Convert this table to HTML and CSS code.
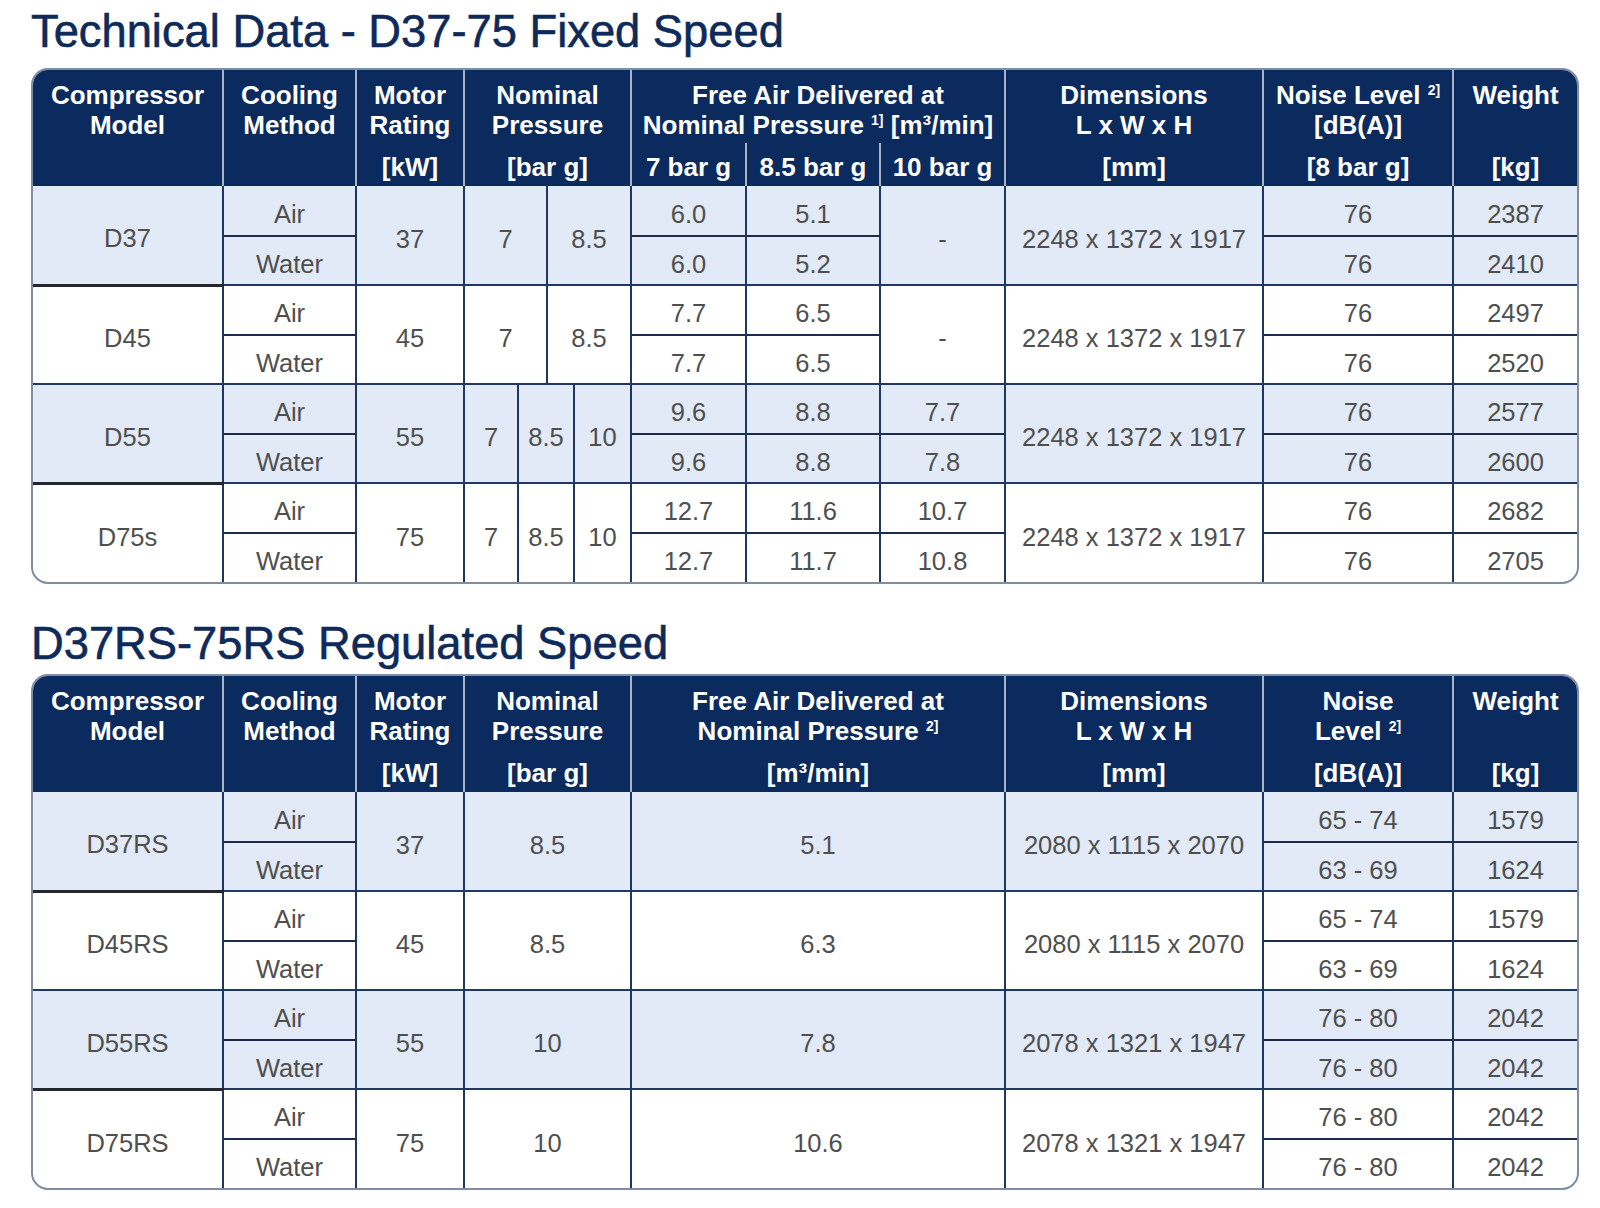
FILE: index.html
```html
<!DOCTYPE html>
<html lang="en">
<head>
<meta charset="utf-8">
<title>Technical Data - D37-75</title>
<link rel="stylesheet" href="styles.css">
</head>
<body>
<div class="page">
  <h1 class="title">Technical Data - D37-75 Fixed Speed</h1>
  <div class="tbl-wrap">
    <table class="spec">
      <colgroup>
        <col class="w-model"><col class="w-cool"><col class="w-motor">
        <col class="w-np1"><col class="w-np2"><col class="w-np3"><col class="w-np4">
        <col class="w-f1"><col class="w-f2"><col class="w-f3">
        <col class="w-dim"><col class="w-noise"><col class="w-weight">
      </colgroup>
      <thead>
        <tr class="ha">
          <th>Compressor<br>Model</th>
          <th>Cooling<br>Method</th>
          <th>Motor<br>Rating</th>
          <th colspan="4">Nominal<br>Pressure</th>
          <th colspan="3">Free Air Delivered at<br>Nominal Pressure <sup>1]</sup> [m³/min]</th>
          <th>Dimensions<br>L x W x H</th>
          <th>Noise Level <sup>2]</sup><br>[dB(A)]</th>
          <th class="last">Weight</th>
        </tr>
        <tr class="hb">
          <th></th>
          <th></th>
          <th>[kW]</th>
          <th colspan="4">[bar g]</th>
          <th>7 bar g</th>
          <th>8.5 bar g</th>
          <th>10 bar g</th>
          <th>[mm]</th>
          <th>[8 bar g]</th>
          <th class="last">[kg]</th>
        </tr>
      </thead>
      <tbody>
        <tr class="g tint first">
          <td rowspan="2" class="model">D37</td><td>Air</td><td rowspan="2">37</td>
          <td colspan="2" rowspan="2">7</td><td colspan="2" rowspan="2">8.5</td>
          <td>6.0</td><td>5.1</td><td rowspan="2">-</td>
          <td rowspan="2">2248 x 1372 x 1917</td><td>76</td><td class="last">2387</td>
        </tr>
        <tr class="s tint">
          <td>Water</td><td>6.0</td><td>5.2</td><td>76</td><td class="last">2410</td>
        </tr>
        <tr class="g">
          <td rowspan="2" class="model dark">D45</td><td>Air</td><td rowspan="2">45</td>
          <td colspan="2" rowspan="2">7</td><td colspan="2" rowspan="2">8.5</td>
          <td>7.7</td><td>6.5</td><td rowspan="2">-</td>
          <td rowspan="2">2248 x 1372 x 1917</td><td>76</td><td class="last">2497</td>
        </tr>
        <tr class="s">
          <td>Water</td><td>7.7</td><td>6.5</td><td>76</td><td class="last">2520</td>
        </tr>
        <tr class="g tint">
          <td rowspan="2" class="model">D55</td><td>Air</td><td rowspan="2">55</td>
          <td rowspan="2">7</td><td colspan="2" rowspan="2">8.5</td><td rowspan="2">10</td>
          <td>9.6</td><td>8.8</td><td>7.7</td>
          <td rowspan="2">2248 x 1372 x 1917</td><td>76</td><td class="last">2577</td>
        </tr>
        <tr class="s tint">
          <td>Water</td><td>9.6</td><td>8.8</td><td>7.8</td><td>76</td><td class="last">2600</td>
        </tr>
        <tr class="g">
          <td rowspan="2" class="model dark">D75s</td><td>Air</td><td rowspan="2">75</td>
          <td rowspan="2">7</td><td colspan="2" rowspan="2">8.5</td><td rowspan="2">10</td>
          <td>12.7</td><td>11.6</td><td>10.7</td>
          <td rowspan="2">2248 x 1372 x 1917</td><td>76</td><td class="last">2682</td>
        </tr>
        <tr class="s">
          <td>Water</td><td>12.7</td><td>11.7</td><td>10.8</td><td>76</td><td class="last">2705</td>
        </tr>
      </tbody>
    </table>
  </div>

  <h1 class="title title-2">D37RS-75RS Regulated Speed</h1>
  <div class="tbl-wrap tbl-wrap-2">
    <table class="spec">
      <colgroup>
        <col class="w-model"><col class="w-cool"><col class="w-motor">
        <col class="w-np"><col class="w-fad">
        <col class="w-dim"><col class="w-noise"><col class="w-weight">
      </colgroup>
      <thead>
        <tr class="ha">
          <th>Compressor<br>Model</th>
          <th>Cooling<br>Method</th>
          <th>Motor<br>Rating</th>
          <th>Nominal<br>Pressure</th>
          <th>Free Air Delivered at<br>Nominal Pressure <sup>2]</sup></th>
          <th>Dimensions<br>L x W x H</th>
          <th>Noise<br>Level <sup>2]</sup></th>
          <th class="last">Weight</th>
        </tr>
        <tr class="hb">
          <th></th>
          <th></th>
          <th>[kW]</th>
          <th>[bar g]</th>
          <th>[m³/min]</th>
          <th>[mm]</th>
          <th>[dB(A)]</th>
          <th class="last">[kg]</th>
        </tr>
      </thead>
      <tbody>
        <tr class="g tint first">
          <td rowspan="2" class="model">D37RS</td><td>Air</td><td rowspan="2">37</td>
          <td rowspan="2">8.5</td><td rowspan="2">5.1</td>
          <td rowspan="2">2080 x 1115 x 2070</td><td>65 - 74</td><td class="last">1579</td>
        </tr>
        <tr class="s tint">
          <td>Water</td><td>63 - 69</td><td class="last">1624</td>
        </tr>
        <tr class="g">
          <td rowspan="2" class="model dark">D45RS</td><td>Air</td><td rowspan="2">45</td>
          <td rowspan="2">8.5</td><td rowspan="2">6.3</td>
          <td rowspan="2">2080 x 1115 x 2070</td><td>65 - 74</td><td class="last">1579</td>
        </tr>
        <tr class="s">
          <td>Water</td><td>63 - 69</td><td class="last">1624</td>
        </tr>
        <tr class="g tint">
          <td rowspan="2" class="model">D55RS</td><td>Air</td><td rowspan="2">55</td>
          <td rowspan="2">10</td><td rowspan="2">7.8</td>
          <td rowspan="2">2078 x 1321 x 1947</td><td>76 - 80</td><td class="last">2042</td>
        </tr>
        <tr class="s tint">
          <td>Water</td><td>76 - 80</td><td class="last">2042</td>
        </tr>
        <tr class="g">
          <td rowspan="2" class="model dark">D75RS</td><td>Air</td><td rowspan="2">75</td>
          <td rowspan="2">10</td><td rowspan="2">10.6</td>
          <td rowspan="2">2078 x 1321 x 1947</td><td>76 - 80</td><td class="last">2042</td>
        </tr>
        <tr class="s">
          <td>Water</td><td>76 - 80</td><td class="last">2042</td>
        </tr>
      </tbody>
    </table>
  </div>
</div>
</body>
</html>
```

FILE: styles.css
```css
html, body {
  margin: 0;
  padding: 0;
  background: #ffffff;
}

body {
  font-family: "Liberation Sans", Arial, Helvetica, sans-serif;
}

.page {
  width: 1548px;
  padding: 6px 0 0 31px;
}

.title {
  margin: 0;
  font-size: 45.3px;
  line-height: 52px;
  font-weight: 400;
  color: #0e2a5a;
  -webkit-text-stroke: 0.6px #0e2a5a;
}

.title-2 {
  margin-top: 34px;
}

.tbl-wrap {
  margin-top: 10px;
  border: 2px solid #7f8ca2;
  border-radius: 17px;
  overflow: hidden;
  background: #ffffff;
}

.tbl-wrap-2 {
  margin-top: 4px;
}

.spec {
  width: 1544px;
  border-collapse: collapse;
  table-layout: fixed;
}

.w-model { width: 190px; }
.w-cool { width: 133px; }
.w-motor { width: 108px; }
.w-np1 { width: 54px; }
.w-np2 { width: 29px; }
.w-np3 { width: 27px; }
.w-np4 { width: 57px; }
.w-np { width: 167px; }
.w-f1 { width: 115px; }
.w-f2 { width: 134px; }
.w-f3 { width: 125px; }
.w-fad { width: 374px; }
.w-dim { width: 258px; }
.w-noise { width: 190px; }
.w-weight { width: 124px; }

.spec th {
  background: #0b2a5d;
  color: #ffffff;
  font-weight: 700;
  font-size: 26px;
  line-height: 30px;
  padding: 0;
  border: 0;
  border-right: 2px solid #a9b3c5;
  text-align: center;
  white-space: nowrap;
}

.spec th sup {
  font-size: 14px;
  line-height: 0;
  vertical-align: 9px;
}

.spec tr.ha {
  height: 73px;
}

.spec tr.ha th {
  vertical-align: top;
  padding-top: 10px;
}

.spec tr.hb {
  height: 43px;
}

.spec tr.hb th {
  vertical-align: middle;
  padding-top: 5px;
}

.spec th.last,
.spec td.last {
  border-right: 0;
}

.spec td {
  font-size: 25.5px;
  color: #4f4f4f;
  text-align: center;
  vertical-align: middle;
  padding: 8px 0 0;
  border: 0;
  border-right: 2px solid #1e3662;
  white-space: nowrap;
}

.spec tbody tr {
  height: 49.5px;
}

.spec tr.tint td {
  background: #e1eaf6;
}

.spec tr.g td {
  border-top: 2px solid #1f3864;
}

.spec tr.g td.dark {
  border-top: 3px solid #23272f;
}

.spec tr.first td {
  border-top: 0;
}

.spec tr.s td {
  border-top: 2px solid #1a2b4c;
}
```
